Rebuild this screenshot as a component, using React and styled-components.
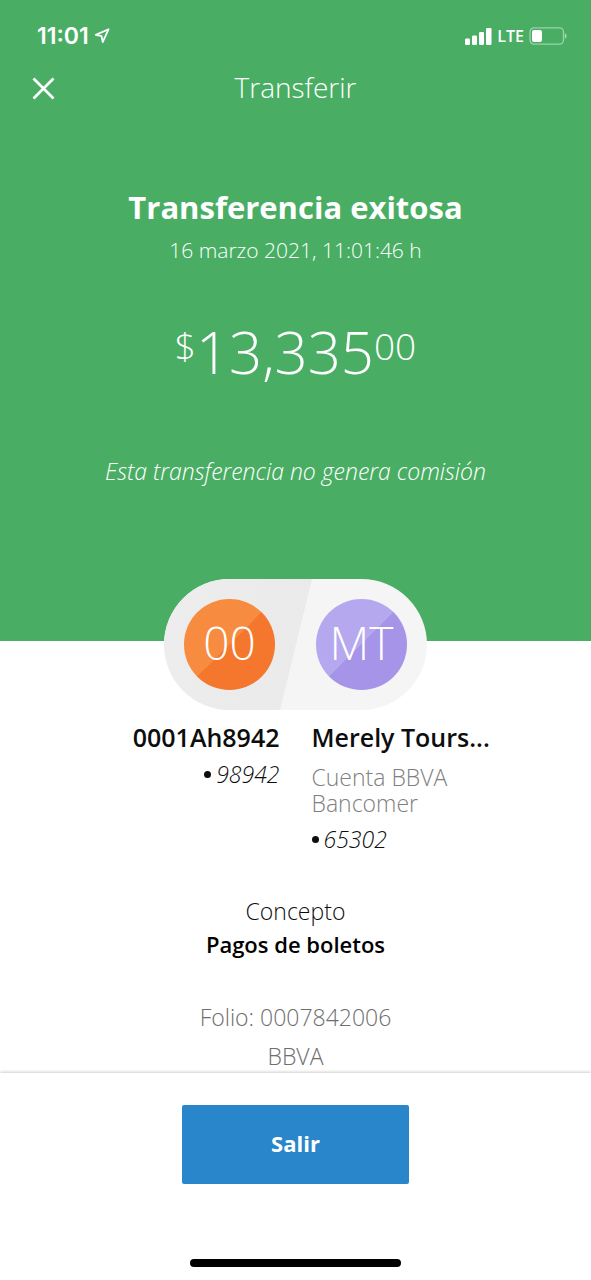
import React from "react";
import styled, { createGlobalStyle } from "styled-components";

const GlobalStyle = createGlobalStyle`
  *, *::before, *::after { box-sizing: border-box; }
  body {
    margin: 0;
    background: #fff;
    color: #0d0d0d;
    font-family: "Open Sans", "Noto Sans", sans-serif;
    font-size: 23px;
    line-height: 30px;
    font-weight: 350;
  }
  h1, h2, p, dl, dt, dd { margin: 0; }
`;

const Screen = styled.div`
  min-height: 100vh;
  display: flex;
  flex-direction: column;
`;

const Hero = styled.header`
  background: #49ae64;
  color: #fff;
  padding-bottom: 155px;
  text-align: center;
`;

const StatusBar = styled.div`
  display: flex;
  align-items: center;
  justify-content: space-between;
  height: 56px;
  padding: 16px 24px 0 37px;
`;

const StatusGroup = styled.div`
  display: flex;
  align-items: center;
  gap: 5px;
`;

const Clock = styled.span`
  font-family: Inter, sans-serif;
  font-size: 23px;
  font-weight: 600;
`;

const Network = styled.span`
  font-size: 16px;
  font-weight: 600;
`;

const NavBar = styled.nav`
  display: grid;
  grid-template-columns: 1fr auto 1fr;
  align-items: center;
  height: 64px;
  padding: 0 24px;
`;

const CloseButton = styled.button`
  display: flex;
  justify-self: start;
  padding: 8px;
  border: 0;
  background: none;
  color: inherit;
  cursor: pointer;
`;

const NavTitle = styled.h1`
  padding-bottom: 2px;
  font-size: 28px;
  font-weight: 300;
  line-height: 40px;
`;

const Result = styled.h2`
  margin-top: 65px;
  font-size: 31px;
  font-weight: 700;
  line-height: 44px;
`;

const DateLine = styled.p`
  margin-top: 6px;
  font-size: 21px;
`;

const Amount = styled.p`
  display: flex;
  justify-content: center;
  align-items: flex-start;
  margin-top: 51px;
  font-size: 58px;
  font-weight: 300;
  line-height: 72px;
`;

const AmountMinor = styled.span`
  font-size: 37px;
  line-height: 60px;
`;

const Note = styled.p`
  margin-top: 68px;
  font-style: italic;
`;

const Details = styled.main`
  flex: 1;
  display: flex;
  flex-direction: column;
  align-items: center;
`;

const PartyBadge = styled.div`
  position: relative;
  display: flex;
  align-items: center;
  gap: 41px;
  margin-top: -62px;
  padding: 20px;
  border-radius: 66px;
  background: #f5f5f5;
  overflow: hidden;

  &::before {
    content: "";
    position: absolute;
    inset: 0;
    background: linear-gradient(100deg, #ededed, #eaeaea 56%);
    clip-path: polygon(0 0, 148px 0, 116px 100%, 0 100%);
  }
`;

const Avatar = styled.span`
  position: relative;
  display: flex;
  align-items: center;
  justify-content: center;
  width: 91px;
  height: 91px;
  padding-bottom: 5px;
  border-radius: 50%;
  background: linear-gradient(135deg, ${(p) => p.$light} 50%, ${(p) => p.$dark} 50%);
  color: #fff;
  font-size: 46px;
  line-height: 60px;
`;

const Parties = styled.div`
  align-self: stretch;
  display: grid;
  grid-template-columns: 1fr 1fr;
  column-gap: 32px;
  margin-top: 8px;
  padding: 0 24px;
`;

const Party = styled.section`
  text-align: ${(p) => p.$align};
`;

const PartyName = styled.h2`
  font-size: 25px;
  font-weight: 600;
  line-height: 38px;
`;

const Bank = styled.p`
  width: 160px;
  margin: 8px 0;
  color: #808080;
  line-height: 26px;
`;

const Account = styled.p`
  display: flex;
  align-items: center;
  justify-content: ${(p) => p.$align};
  gap: 5px;
  margin-top: 3px;
  font-style: italic;

  &::before {
    content: "";
    width: 7px;
    height: 7px;
    border-radius: 50%;
    background: currentColor;
  }
`;

const Concept = styled.dl`
  margin-top: 41px;
  text-align: center;
  line-height: 33px;
`;

const ConceptValue = styled.dd`
  color: #000;
  font-size: 22px;
  font-weight: 600;
`;

const Reference = styled.div`
  display: flex;
  flex-direction: column;
  gap: 9px;
  margin-top: 41px;
  color: #6e6e6e;
  text-align: center;
`;

const Footer = styled.footer`
  position: sticky;
  bottom: 0;
  display: flex;
  flex-direction: column;
  align-items: center;
  gap: 75px;
  padding: 32px 24px 13px;
  background: #fff;
  box-shadow: 0 -1px 3px rgba(0, 0, 0, 0.2);
`;

const ExitButton = styled.button`
  width: 227px;
  height: 79px;
  padding: 0 16px 4px;
  border: 0;
  border-radius: 2px;
  background: #2a86ca;
  color: #fff;
  font: inherit;
  font-size: 22px;
  font-weight: 700;
  cursor: pointer;
`;

const HomeIndicator = styled.div`
  width: 211px;
  height: 8px;
  border-radius: 4px;
  background: #000;
`;

const LocationIcon = () => (
  <svg width="16" height="16" viewBox="0 0 16 16" fill="none" aria-hidden="true">
    <path d="M14.6 1.2 1.8 6.900l5.800 1.200 1.100 6z" stroke="#fff" strokeWidth="1.800" strokeLinejoin="round" />
  </svg>
);

const SignalIcon = () => (
  <svg width="27" height="17" viewBox="0 0 27 17" fill="#fff" aria-hidden="true">
    <rect x="0" y="10.500" width="5" height="6.500" rx="1.200" />
    <rect x="7" y="7.500" width="5" height="9.500" rx="1.200" />
    <rect x="14" y="4" width="5" height="13" rx="1.200" />
    <rect x="21" y="0" width="5.500" height="17" rx="1.200" />
  </svg>
);

const BatteryIcon = () => (
  <svg width="38" height="18" viewBox="0 0 38 18" aria-hidden="true">
    <rect x="1" y="0.900" width="33.500" height="16.200" rx="4" fill="none" stroke="#fff" strokeOpacity="0.450" strokeWidth="1.300" />
    <rect x="3" y="3" width="10" height="12" rx="2" fill="#fff" />
    <path d="M35.800 6.300c2.400.8 2.400 4.600 0 5.400z" fill="#fff" fillOpacity="0.500" />
  </svg>
);

const CloseIcon = () => (
  <svg width="23" height="23" viewBox="0 0 23 23" fill="none" aria-hidden="true">
    <path d="M1.500 1.500l20 20M21.500 1.500l-20 20" stroke="#fff" strokeWidth="2.700" />
  </svg>
);

export default function App() {
  return (
    <>
      <GlobalStyle />
      <Screen>
        <Hero>
          <StatusBar>
            <StatusGroup>
              <Clock>11:01</Clock>
              <LocationIcon />
            </StatusGroup>
            <StatusGroup>
              <SignalIcon />
              <Network>LTE</Network>
              <BatteryIcon />
            </StatusGroup>
          </StatusBar>
          <NavBar>
            <CloseButton type="button" aria-label="Cerrar">
              <CloseIcon />
            </CloseButton>
            <NavTitle>Transferir</NavTitle>
          </NavBar>
          <Result>Transferencia exitosa</Result>
          <DateLine>16 marzo 2021, 11:01:46 h</DateLine>
          <Amount>
            <AmountMinor>$</AmountMinor>
            <span>13,335</span>
            <AmountMinor>00</AmountMinor>
          </Amount>
          <Note>Esta transferencia no genera comisión</Note>
        </Hero>
        <Details>
          <PartyBadge>
            <Avatar $light="#f78b3f" $dark="#f4772d">00</Avatar>
            <Avatar $light="#b5a8ee" $dark="#a594e8">MT</Avatar>
          </PartyBadge>
          <Parties>
            <Party $align="right">
              <PartyName>0001Ah8942</PartyName>
              <Account $align="flex-end">98942</Account>
            </Party>
            <Party $align="left">
              <PartyName>Merely Tours...</PartyName>
              <Bank>Cuenta BBVA Bancomer</Bank>
              <Account $align="flex-start">65302</Account>
            </Party>
          </Parties>
          <Concept>
            <dt>Concepto</dt>
            <ConceptValue>Pagos de boletos</ConceptValue>
          </Concept>
          <Reference>
            <p>Folio: 0007842006</p>
            <p>BBVA</p>
          </Reference>
        </Details>
        <Footer>
          <ExitButton type="button">Salir</ExitButton>
          <HomeIndicator />
        </Footer>
      </Screen>
    </>
  );
}
